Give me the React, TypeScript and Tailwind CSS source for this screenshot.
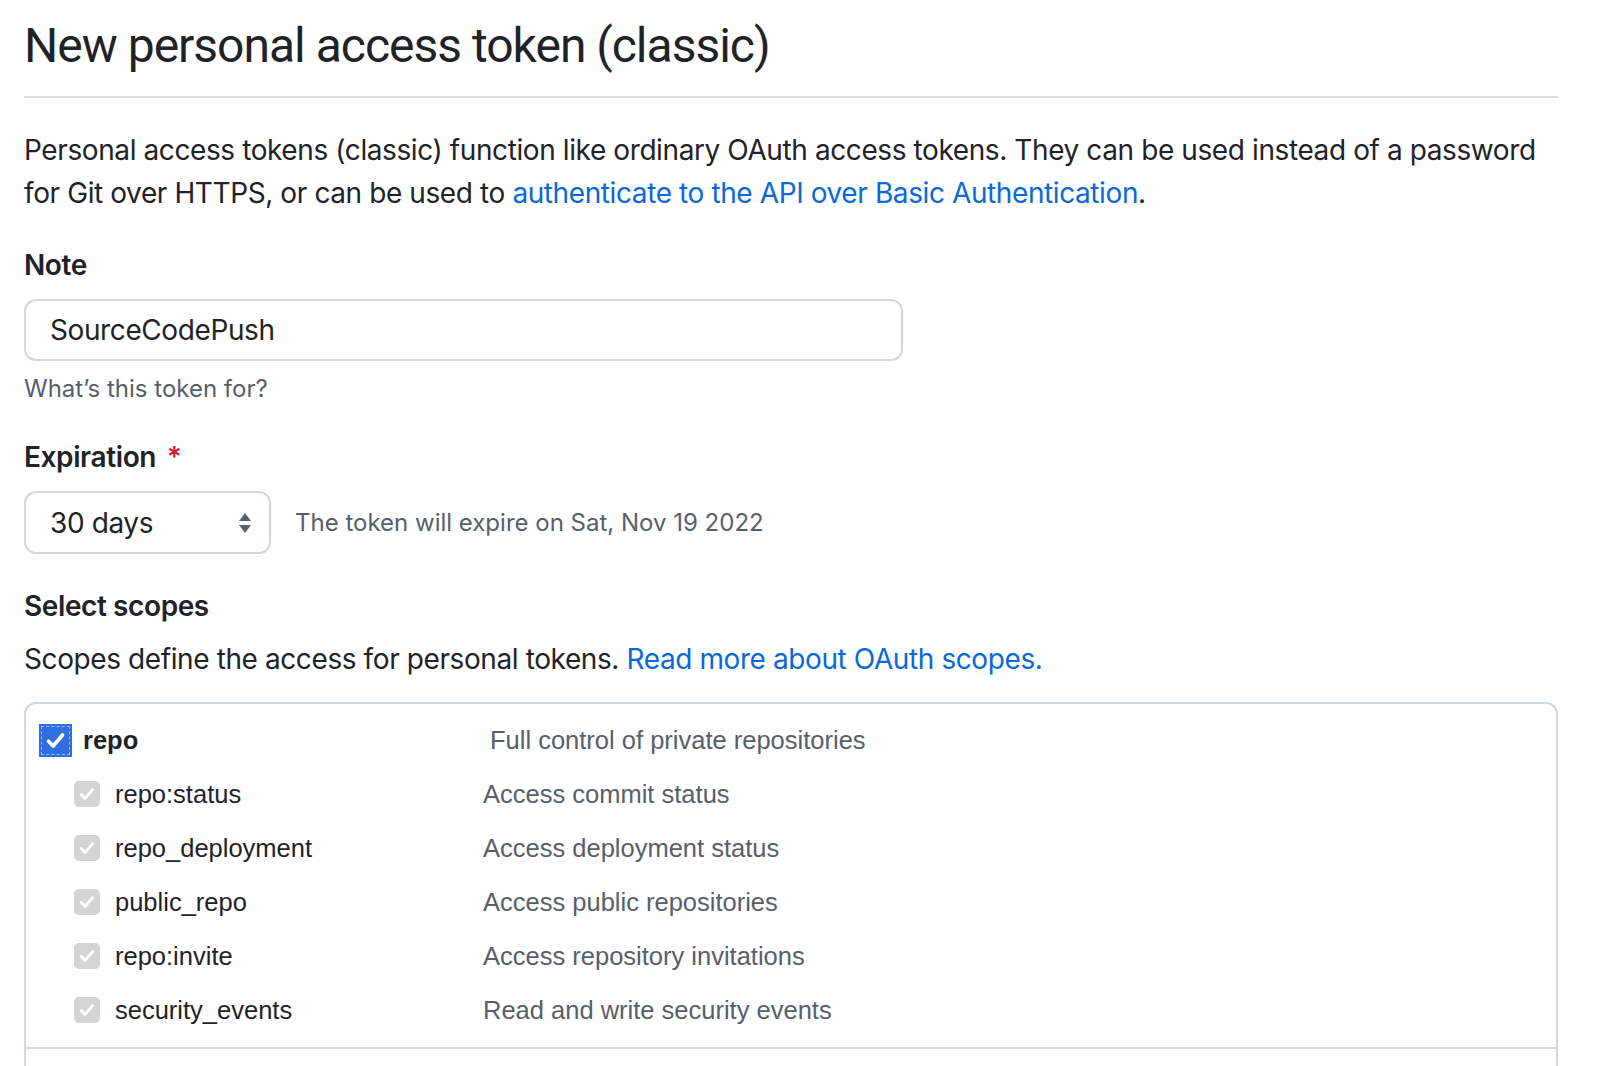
import React from "react"

const subScopes = [
  { name: "repo:status", desc: "Access commit status" },
  { name: "repo_deployment", desc: "Access deployment status" },
  { name: "public_repo", desc: "Access public repositories" },
  { name: "repo:invite", desc: "Access repository invitations" },
  { name: "security_events", desc: "Read and write security events" },
]

function CheckMark({ className }: { className?: string }) {
  return (
    <svg viewBox="0 0 16 16" className={className} fill="none">
      <path d="M3.5 8.5l3 3 6-7" stroke="currentColor" strokeWidth="2.4" strokeLinecap="round" strokeLinejoin="round" />
    </svg>
  )
}

export default function App() {
  return (
    <div className="h-[1066px] bg-white text-[#1f2328] font-['Inter','Noto_Sans',sans-serif] overflow-hidden">
      <div className="w-[1534px] ml-6">
        {/* Header */}
        <div className="pt-[16px] pb-[20px] border-b-2 border-[#d8dee4]">
          <h1 className="text-[48px] leading-[60px] font-normal tracking-[-1px] font-['Roboto','Liberation_Sans',sans-serif]">
            New personal access token (classic)
          </h1>
        </div>

        <p className="mt-[31px] text-[28px] leading-[43px] tracking-[-0.4px]">
          Personal access tokens (classic) function like ordinary OAuth access tokens. They can be used instead of a password for Git over HTTPS, or can be used to{" "}
          <a className="text-[#0969da]">authenticate to the API over Basic Authentication</a>.
        </p>

        {/* Note */}
        <div className="mt-[29px]">
          <div className="text-[28px] leading-[42px] font-semibold tracking-[-0.4px]">Note</div>
          <div className="mt-[13px] w-[879px] h-[62px] border-2 border-[#d0d7de] rounded-[12px] flex items-center px-[24px] text-[28px] tracking-[-0.4px]">
            SourceCodePush
          </div>
          <div className="mt-[10px] text-[24px] leading-[36px] text-[#57606a]">What’s this token for?</div>
        </div>

        {/* Expiration */}
        <div className="mt-[29px]">
          <div className="text-[28px] leading-[42px] font-semibold tracking-[-0.4px]">
            Expiration <span className="text-[#cf222e] ml-1">*</span>
          </div>
          <div className="mt-[13px] flex items-center">
            <div className="w-[247px] h-[63px] border-2 border-[#d0d7de] rounded-[12px] flex items-center justify-between pl-[24px] pr-[16px] text-[28px] tracking-[-0.4px]">
              <span>30 days</span>
              <svg viewBox="0 0 16 24" className="w-[16px] h-[24px] text-[#57606a]" fill="currentColor">
                <path d="M8 2l6 8H2z" />
                <path d="M8 22l6-8H2z" />
              </svg>
            </div>
            <span className="ml-[24px] text-[24px] text-[#57606a]">The token will expire on Sat, Nov 19 2022</span>
          </div>
        </div>

        {/* Scopes */}
        <div className="mt-[31px]">
          <div className="text-[28px] leading-[42px] font-semibold tracking-[-0.4px]">Select scopes</div>
          <p className="mt-[11px] text-[28px] leading-[43px] tracking-[-0.4px]">
            Scopes define the access for personal tokens. <a className="text-[#0969da]">Read more about OAuth scopes.</a>
          </p>
          <div className="mt-[21px] border-2 border-b-0 border-[#d0d7de] rounded-t-[12px] font-['Liberation_Sans','Arial',sans-serif] text-[25.5px]">
            <div className="pt-[9px] pb-[10px] border-b-2 border-[#d0d7de]">
              <div className="flex items-center h-[54px] pl-[13px]">
                <div className="w-[33px] h-[33px] bg-[#2f6fe0] p-[2px]">
                  <div className="w-full h-full border border-dashed border-white/50 flex items-center justify-center text-white">
                    <CheckMark className="w-[25px] h-[25px]" />
                  </div>
                </div>
                <span className="ml-[11px] w-[407px] font-bold">repo</span>
                <span className="text-[#57606a]">Full control of private repositories</span>
              </div>
              {subScopes.map((s) => (
                <div key={s.name} className="flex items-center h-[54px] pl-[48px]">
                  <div className="w-[26px] h-[26px] rounded-[5px] bg-[#d4d4d4] flex items-center justify-center text-white">
                    <CheckMark className="w-[20px] h-[20px]" />
                  </div>
                  <span className="ml-[15px] w-[368px]">{s.name}</span>
                  <span className="text-[#57606a]">{s.desc}</span>
                </div>
              ))}
            </div>
            <div className="h-[40px]" />
          </div>
        </div>
      </div>
    </div>
  )
}
